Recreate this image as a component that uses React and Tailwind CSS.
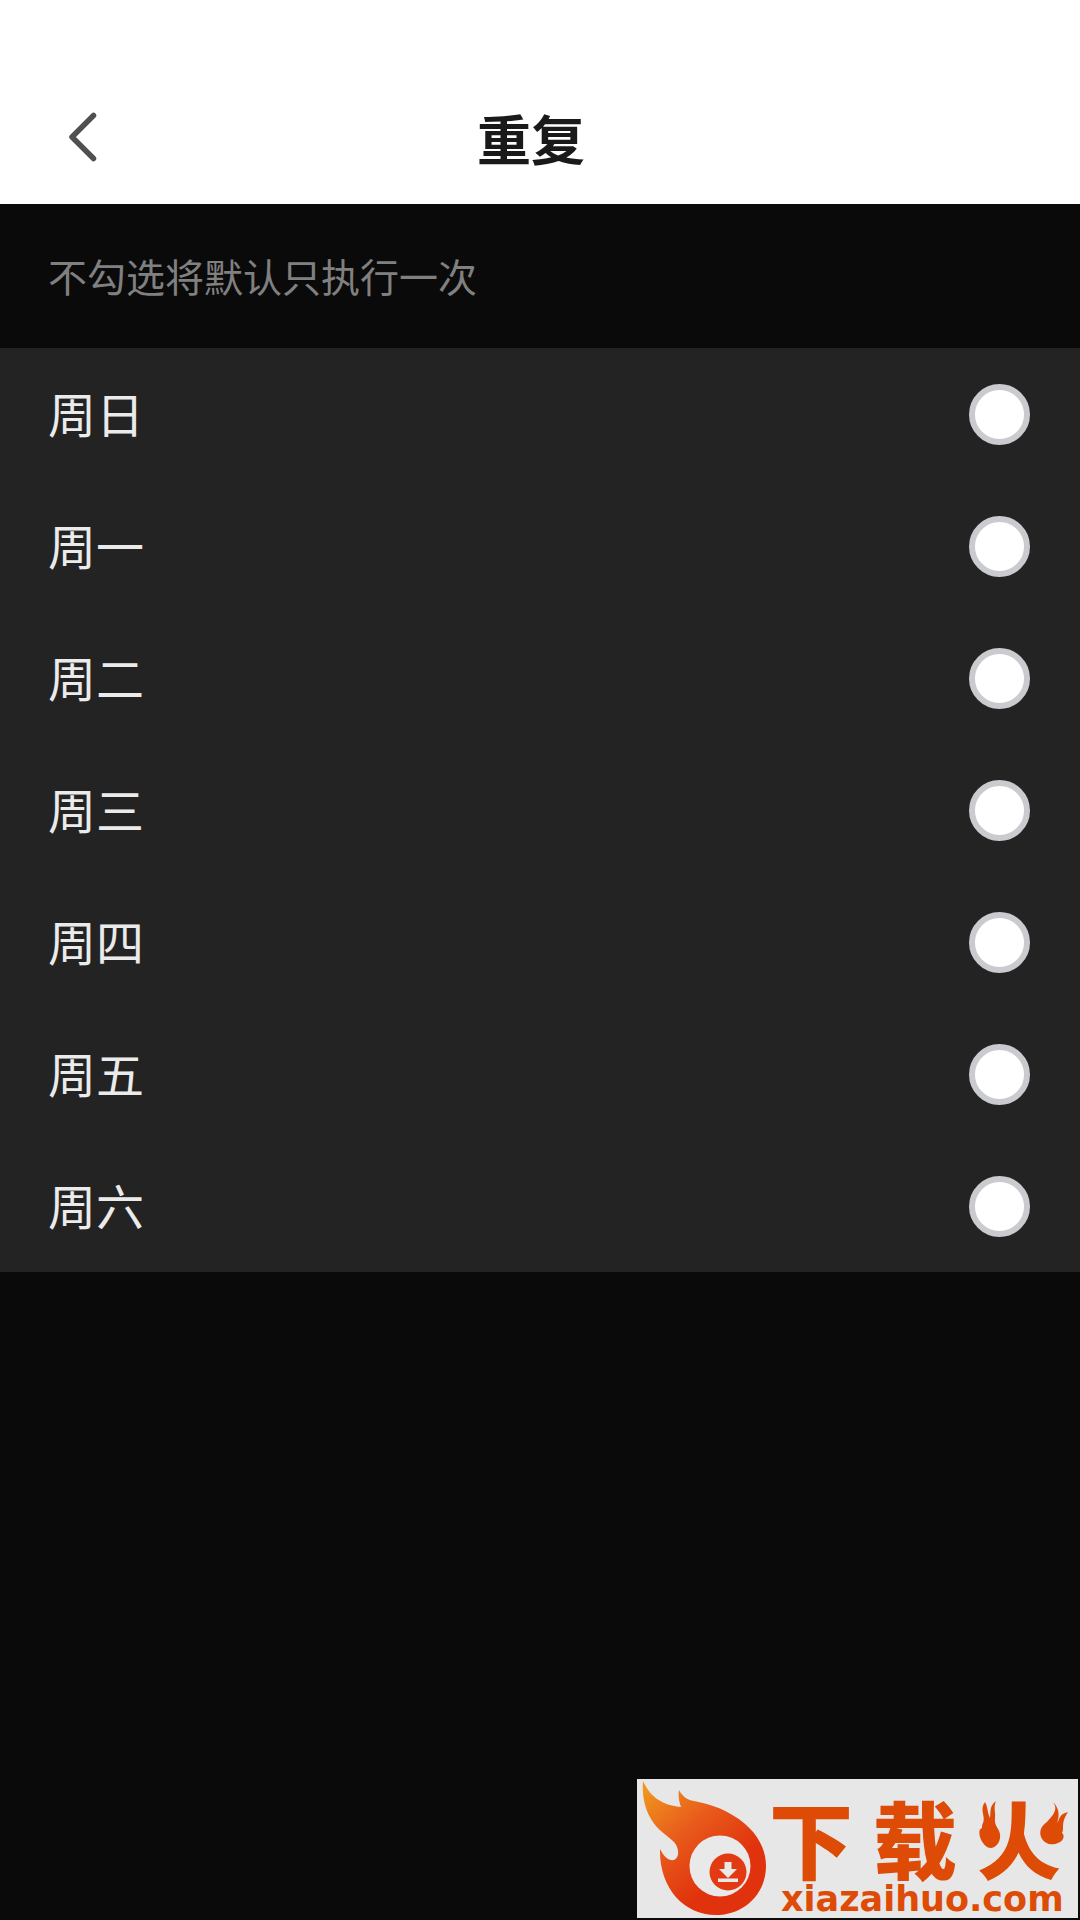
import { useState } from "react";

const DAYS = ["周日", "周一", "周二", "周三", "周四", "周五", "周六"];

function FlameMark() {
  return (
    <svg viewBox="0 0 132 139" className="h-[139px] w-[132px] shrink-0" aria-hidden="true">
      <defs>
        <linearGradient id="flame" x1="0.05" y1="0.05" x2="0.6" y2="0.75">
          <stop offset="0" stopColor="#f0941f" />
          <stop offset="0.5" stopColor="#e8591b" />
          <stop offset="1" stopColor="#e0320c" />
        </linearGradient>
      </defs>
      <path
        fill="url(#flame)"
        d="M6 2C12 15 22 26 44 28C42 22 41 17 42 11C45 17 50 21 57 22C72 25 85 29 97 37C117 49 129 67 129 87C129 115 107 136 79 136C46 136 22 108 23 70C27 78 32 82 37 81C43 79 42 68 37 63C30 56 20 51 14 40C7 28 5 15 6 2Z"
      />
      <circle cx="83" cy="87" r="30.5" fill="#e9e9e9" />
      <circle cx="91" cy="93" r="18.5" fill="#e23a12" />
      <path fill="#e9e9e9" d="M87.500 83h7v7h5.500l-9 9-9-9h5.500ZM81 99.500h20v3.500h-20Z" />
    </svg>
  );
}

function SmallFlames() {
  return (
    <svg viewBox="0 0 96 60" className="absolute left-0 top-1.5 h-[60px] w-24" aria-hidden="true">
      <path fill="#e7e7e7" d="M0 0H30V34L22 50H0ZM55 0H96V46H60L54 38Z" />
      <g fill="#dd4b06">
        <path d="M8 1C2 8 9 16 6 22C5 24 5 25 5 27C2 28 2 31 3 36C5 42 9 47 14 47C20 46 24 40 23 33C22 27 17 25 18 17C19 11 16 7 19 0C12 5 14 11 13 17C10 11 11 6 8 1Z" />
        <path d="M76 1C82 9 75 15 70 21C64 25 62 30 64 36C67 43 75 45 81 42C87 40 88 34 85 32C88 27 83 23 91 11C82 13 83 18 80 22C83 14 82 7 76 1Z" />
      </g>
    </svg>
  );
}

function SiteBadge() {
  return (
    <a
      href="#xiazaihuo"
      className="mb-0.5 mr-0.5 mt-auto flex h-[139px] w-[441px] self-end bg-[#e7e7e7] text-[#dd4b06]"
    >
      <FlameMark />
      <span className="flex flex-col gap-1 pt-4">
        <span className="flex gap-5 text-[84px] font-black leading-[84px]">
          <span>下</span>
          <span>载</span>
          <span className="relative">
            火
            <SmallFlames />
          </span>
        </span>
        <span className="pl-3 font-['DejaVu_Sans',sans-serif] text-[35px] font-bold leading-[32px]">
          xiazaihuo.com
        </span>
      </span>
    </a>
  );
}

export default function App() {
  const [selected, setSelected] = useState([]);
  const toggle = (day) =>
    setSelected((list) => (list.includes(day) ? list.filter((d) => d !== day) : [...list, day]));

  return (
    <div className="flex min-h-screen flex-col bg-[#0a0a0a] font-['Noto_Sans_CJK_SC',sans-serif]">
      <header className="grid h-[204px] grid-cols-[144px_1fr_162px] items-center bg-white pt-[70px]">
        <button type="button" aria-label="返回" className="flex h-24 items-center pl-[68px]">
          <svg
            viewBox="0 0 30 50"
            className="h-[50px] w-[30px]"
            fill="none"
            stroke="#505050"
            strokeWidth="5.500"
            strokeLinecap="round"
            strokeLinejoin="round"
          >
            <path d="M25.500 3.500 4 25 25.500 46.500" />
          </svg>
        </button>
        <h1 className="pt-0.5 text-center text-[54px] font-bold leading-[72px] text-[#1a1a1a]">重复</h1>
      </header>
      <p className="px-12 pb-[49px] pt-[47px] text-[39px] leading-[48px] text-[#808080]">
        不勾选将默认只执行一次
      </p>
      <ul className="bg-[#232323]">
        {DAYS.map((day) => (
          <li key={day}>
            <label className="flex h-[132px] items-center justify-between pl-12 pr-[50px] text-[48px] leading-[72px] text-[#ebebeb]">
              <span className="pb-1">{day}</span>
              <input
                type="checkbox"
                checked={selected.includes(day)}
                onChange={() => toggle(day)}
                className="size-[61px] appearance-none rounded-full border-[6px] border-[#c9cbcf] bg-white checked:bg-[#3b82f6]"
              />
            </label>
          </li>
        ))}
      </ul>
      <SiteBadge />
    </div>
  );
}
